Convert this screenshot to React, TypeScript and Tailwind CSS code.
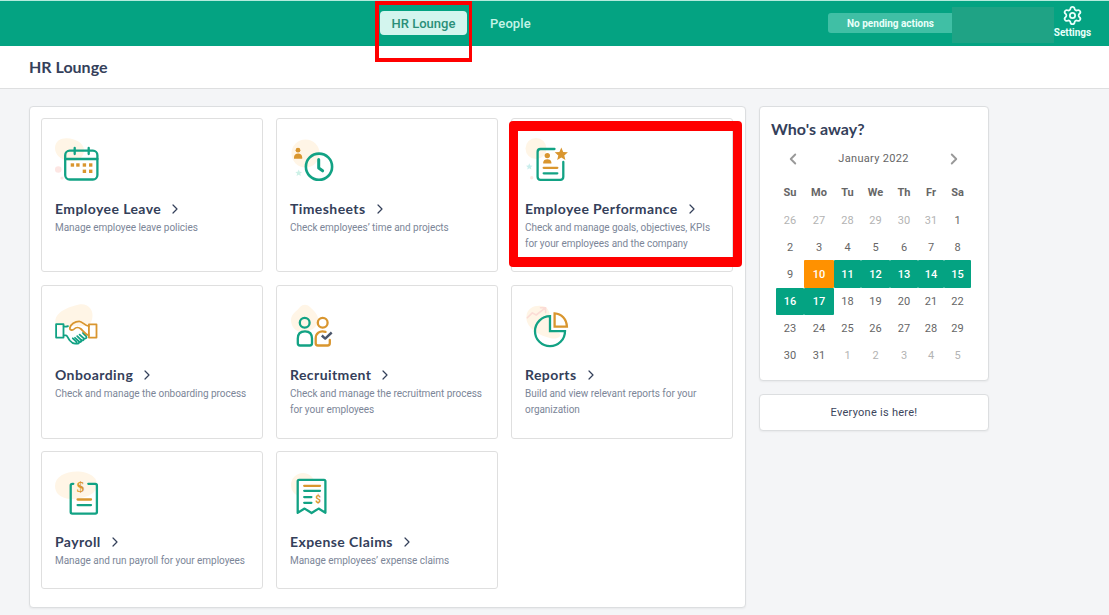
import React from 'react'
import { ChevronLeft, ChevronRight, Settings } from 'lucide-react'

const GREEN = '#12a284'
const ORANGE = '#d9962f'
const CREAM = '#fff5e6'

const STAR = 'M0 -6.8 L1.9 -2.4 L6.6 -2 L3 1.1 L4.1 5.8 L0 3.3 L-4.1 5.8 L-3 1.1 L-6.6 -2 L-1.9 -2.4 Z'

function Icon({ children }: { children: React.ReactNode }) {
  return (
    <svg
      width="48"
      height="48"
      viewBox="0 0 48 48"
      fill="none"
      stroke={GREEN}
      strokeWidth="2.3"
      strokeLinecap="round"
      strokeLinejoin="round"
      className="overflow-visible"
    >
      {children}
    </svg>
  )
}

function LeaveIcon() {
  return (
    <Icon>
      <path d="M0 12 C0 5 6 2 12 2.3 C20 2.6 29 7 29 14 C29 22 22 26 14 25 C6 24 0 19 0 12Z" fill={CREAM} stroke="none" />
      <circle cx="3.3" cy="33.5" r="3.3" fill="#fde6e3" stroke="none" />
      <circle cx="7" cy="42" r="1.6" fill="#fde6e3" stroke="none" />
      <rect x="10.2" y="14.7" width="32.2" height="28.8" rx="4.5" />
      <path d="M10.2 23 H42.4 M19.7 12 V18 M33.7 12 V18" />
      <g fill={ORANGE} stroke="none">
        <rect x="15.7" y="27.3" width="3.4" height="3.4" />
        <rect x="21.2" y="27.3" width="3.4" height="3.4" />
        <rect x="27.7" y="27.3" width="3.4" height="3.4" />
        <rect x="34" y="27.3" width="3.4" height="3.4" />
        <rect x="27.7" y="33.6" width="3.4" height="3.4" />
        <rect x="34" y="33.6" width="3.4" height="3.4" />
      </g>
    </Icon>
  )
}

function TimesheetIcon() {
  return (
    <Icon>
      <circle cx="15.5" cy="17.5" r="14" fill={CREAM} stroke="none" />
      <path d={STAR} transform="translate(8.7 37) scale(0.52)" fill="#cdf1e7" stroke="none" />
      <circle cx="8" cy="14.2" r="2.4" fill={ORANGE} stroke="none" />
      <path d="M4 22.8 V21.5 C4 19 5.8 17.6 8.1 17.6 C10.4 17.6 12.2 19 12.2 21.5 V22.8Z" fill={ORANGE} stroke="none" />
      <circle cx="29" cy="30.7" r="13.1" strokeWidth="2.6" />
      <path d="M28.7 23.5 V32 L32.6 34.8" strokeWidth="3" />
    </Icon>
  )
}

function PerformanceIcon() {
  return (
    <Icon>
      <circle cx="11" cy="12.5" r="10.5" fill={CREAM} stroke="none" />
      <path d={STAR} transform="translate(4.3 30.7) scale(0.5)" fill="#c9eeed" stroke="none" />
      <circle cx="6.7" cy="41.7" r="1.7" fill="#fde6e3" stroke="none" />
      <path d="M29.5 13 H15.5 Q12.6 13 12.6 16 V40.8 Q12.6 43.8 15.5 43.8 H35.3 Q38.3 43.8 38.3 40.8 V26" />
      <path d={STAR} transform="translate(36.3 18.3)" fill={ORANGE} stroke="none" />
      <circle cx="22.3" cy="19.6" r="2.7" fill={ORANGE} stroke="none" />
      <path d="M18.2 27.4 V26.6 C18.2 24.3 20 23.2 22.3 23.2 C24.6 23.2 26.4 24.3 26.4 26.6 V27.4Z" fill={ORANGE} stroke="none" />
      <path d="M18.7 31.8 H32.3" stroke={ORANGE} />
      <path d="M18.7 37.3 H32.3" />
    </Icon>
  )
}

function OnboardingIcon() {
  return (
    <Icon>
      <path d="M0.5 21 C-1 10 14 5 24 2.6 C33 1 38 8 37.5 14 C37 22 34 24 24 24 H6 C2 24 1 23 0.5 21Z" fill={CREAM} stroke="none" />
      <g strokeWidth="1.8">
        <rect x="1.1" y="22.2" width="7.4" height="13.4" />
        <path d="M8.7 24.2 C10.5 25 11.5 24.8 13 24.2" />
        <path d="M8.7 33.3 H11 C12.5 33.6 12.8 36 14.8 38.5 C16.5 40.5 18.5 42 20.7 41.6 C22 41.4 21.8 40 21 39.3 L17.8 36.3" />
        <path d="M20 35.8 L24 39.5 C25.5 40.8 27.4 39.2 26 37.8 L22.2 34.2" />
        <path d="M26 37.8 C27.8 39.2 29.8 37.6 28.5 36.2 L24.6 32.6 M28.5 36.2 C30.5 37.4 32.5 35.6 31 34 L28 31" />
        <path d="M21.5 41.4 C23 42.2 24.6 41 24.2 39.7" />
        <g stroke={ORANGE}>
          <rect x="33.9" y="22.4" width="7.6" height="13.2" />
          <path d="M33.8 24.2 C30 24 27.5 19.3 24.2 19.3 C20 19.3 15.5 22.3 14.8 26 C14.6 28.2 17.5 28.8 19.2 27 C21 25 24 25.2 26 27 C28 29 30.8 32.8 33.8 33.2" />
        </g>
      </g>
    </Icon>
  )
}

function RecruitmentIcon() {
  return (
    <Icon>
      <path d="M1 18 C1 12 7 9 10 5 C13 2 17 2 20 5 C24 9 29 13 28 19 C27 26 20 30 12 30 C5 30 1 24 1 18Z" fill={CREAM} stroke="none" />
      <circle cx="14.7" cy="20.7" r="4.9" />
      <path d="M7.8 41.3 V36.5 C7.8 31.7 10.5 29.3 15 29.3 C19.5 29.3 22 31.7 22 36.5 V41.3 Q22 43.5 19.8 43.5 H10 Q7.8 43.5 7.8 41.3Z" />
      <g stroke={ORANGE}>
        <circle cx="32.7" cy="20.7" r="4.9" />
        <path d="M35.5 29.8 C29.5 28 25.7 31.5 25.7 36.5 V41.3 Q25.7 43.5 27.9 43.5 H37.6 Q39.8 43.5 39.8 41.3 V38" />
      </g>
      <path d="M31.8 33.5 L35.2 36.6 L41.7 30.5" stroke="#4b566b" strokeWidth="2.4" strokeLinecap="butt" />
    </Icon>
  )
}

function ReportsIcon() {
  return (
    <Icon>
      <path d="M1.5 14 C2 6 10 3 17 4 C24 5 25 11 25 17 V29 L34 31 C38 34 32 38 25 36 C12 33 0 24 1.5 14Z" fill={CREAM} stroke="none" />
      <path d="M2.3 15.8 L7.3 10.9 L11.2 13 L20.4 5.8 M15.5 5.8 H20.6 V10.6" stroke="#fbdcd6" strokeWidth="1.6" />
      <path d="M25 14.2 A15 15 0 1 0 40 29.2 H25Z" strokeLinejoin="miter" />
      <path d="M29.6 11.4 C36.5 11.8 41.5 17 41.9 24.6 H29.6Z" stroke={ORANGE} strokeLinejoin="miter" />
    </Icon>
  )
}

function PayrollIcon() {
  return (
    <Icon>
      <path d="M0 17 C0 8 10 2.6 22 2.6 C33 2.6 43 8 42 17 C41 26 28 30 15 30 C5 29 0 24 0 17Z" fill={CREAM} stroke="none" />
      <path d="M18.3 14.8 H17.3 Q15.7 14.8 15.7 16.4 V43 Q15.7 44.6 17.3 44.6 H40.3 Q41.9 44.6 41.9 43 V16.4 Q41.9 14.8 40.3 14.8 H33.3" />
      <text x="25.4" y="23" textAnchor="middle" fontSize="15" fontWeight="700" fontFamily="Liberation Serif, serif" fill={ORANGE} stroke="none">$</text>
      <path d="M22.6 30.5 H36" stroke={ORANGE} />
      <path d="M22.6 36.1 H36" />
    </Icon>
  )
}

function ExpenseIcon() {
  return (
    <Icon>
      <circle cx="13" cy="16" r="12" fill={CREAM} stroke="none" />
      <path d="M7.7 43.8 V12.3 Q7.7 10.9 9.1 10.9 H34 Q35.4 10.9 35.4 12.3 V43.8 L28.6 39.6 L21.6 44 L14.6 39.6Z" fill="#fff" />
      <path d="M14.2 16.8 H30" stroke={ORANGE} />
      <path d="M14.2 21.8 H30 M14.2 28.1 H21.4 M14.2 33.8 H21.4" />
      <text x="28.2" y="33.5" textAnchor="middle" fontSize="10" fontWeight="700" fontFamily="Roboto, sans-serif" fill={ORANGE} stroke="none">$</text>
    </Icon>
  )
}

const modules = [
  { title: 'Employee Leave', text: 'Manage employee leave policies', icon: LeaveIcon },
  { title: 'Timesheets', text: 'Check employees’ time and projects', icon: TimesheetIcon },
  {
    title: 'Employee Performance',
    text: 'Check and manage goals, objectives, KPIs for your employees and the company',
    icon: PerformanceIcon,
    marked: true,
  },
  { title: 'Onboarding', text: 'Check and manage the onboarding process', icon: OnboardingIcon },
  { title: 'Recruitment', text: 'Check and manage the recruitment process for your employees', icon: RecruitmentIcon },
  { title: 'Reports', text: 'Build and view relevant reports for your organization', icon: ReportsIcon },
  { title: 'Payroll', text: 'Manage and run payroll for your employees', icon: PayrollIcon },
  { title: 'Expense Claims', text: 'Manage employees’ expense claims', icon: ExpenseIcon },
]

const weekdays = ['Su', 'Mo', 'Tu', 'We', 'Th', 'Fr', 'Sa']

// January 2022 starts on a Saturday, so the grid opens with six December days
const days = Array.from({ length: 42 }, (_, i) => {
  const n = i - 5
  if (n < 1) return { label: n + 31, outside: true, n }
  if (n > 31) return { label: n - 31, outside: true, n }
  return { label: n, outside: false, n }
})

function dayClass(day: { outside: boolean; n: number }) {
  if (day.n === 10) return '-mt-px h-[28px] pt-0.5 bg-[#ff9100] text-white font-medium rounded-[1px]'
  if (day.n > 10 && day.n < 16) return '-mt-px h-[28px] pt-0.5 bg-[#04a382] text-white font-medium rounded-[1px]'
  if (day.n === 16 || day.n === 17) return 'h-[27px] pt-px bg-[#04a382] text-white font-medium rounded-[1px]'
  return day.outside ? 'h-[27px] pt-px text-[#b3b3b3]' : 'h-[27px] pt-px text-[#666]'
}

function Header() {
  return (
    <header className="flex h-[46px] border-t border-[#b5ebdd] bg-[#04a382]">
      <nav className="flex flex-1 items-start pl-[380px] pt-2.5 text-[13px] font-medium">
        <div className="relative flex h-6 w-[87px] items-center justify-center rounded bg-[#d3f5ee] pt-0.5 text-[#2a8f78]">
          HR Lounge
          <div className="absolute -left-[5px] -top-[10px] h-[61px] w-[97px] border-4 border-r-3 border-[#ff0000]" />
        </div>
        <div className="ml-[23px] flex h-6 items-center pt-0.5 tracking-[0.1px] text-[#c4f3e7]">People</div>
      </nav>
      <div className="flex pr-[18px]">
        <div className="mt-3 flex h-5 w-[124px] items-center justify-center rounded-l-[3px] bg-[#40bfa5] pl-px text-[10px] font-bold text-[#eafffa]">
          No pending actions
        </div>
        <div className="mt-1.5 h-9 w-[102px] bg-[#1fa385]" />
        <button className="flex w-[37px] flex-col items-center pt-[4px] text-[10px] font-bold text-[#e9fffa]">
          <Settings size={21} strokeWidth={2} className="shrink-0" />
          <span className="leading-[14px]">Settings</span>
        </button>
      </div>
    </header>
  )
}

function Calendar() {
  return (
    <div className="h-[275px] rounded-[4px] border border-[#dcdee0] bg-white shadow-xs">
      <h2 className="pl-[11px] pt-3 font-[Lato] text-[16px] font-bold leading-[20px] tracking-[0.05px] text-[#34405a]">Who's away?</h2>
      <div className="mt-[10px] flex h-5 items-center justify-between pl-[24px] pr-[25px] text-[11px] text-[#666]">
        <ChevronLeft size={18} strokeWidth={2.5} className="-mt-px text-[#999]" />
        <span className="tracking-[0.3px]">January 2022</span>
        <ChevronRight size={18} strokeWidth={2.5} className="-mt-px text-[#999]" />
      </div>
      <div className="ml-4 mt-[10px] grid w-[195px] auto-rows-[27px] grid-cols-[28px_30px_27px_29px_28px_26px_27px] grid-rows-[28px] text-center text-[11px]">
        {weekdays.map((d) => (
          <div key={d} className="flex items-center justify-center font-bold text-[#666]">{d}</div>
        ))}
        {days.map((day) => (
          <div key={day.n} className={`flex items-center justify-center ${dayClass(day)}`}>{day.label}</div>
        ))}
      </div>
    </div>
  )
}

export default function App() {
  return (
    <div className="flex h-[615px] w-[1109px] flex-col overflow-hidden bg-[#f4f5f7] font-[Roboto,sans-serif]">
      <Header />
      <div className="flex h-[43px] items-center border-b border-[#dedfe0] bg-white pl-[29px]">
        <h1 className="font-[Lato] text-[16px] font-bold text-[#34405a]">HR Lounge</h1>
      </div>

      <main className="flex items-start gap-[13px] pl-[29px] pt-[17px]">
        <div className="grid h-[502px] w-[717px] grid-cols-[222.4px_222.4px_222.4px] grid-rows-[154px_154px_138px] gap-[12.6px] rounded-[4px] border border-[#dcdee0] bg-white p-[11px] shadow-xs">
          {modules.map(({ title, text, icon: ModuleIcon, marked }) => (
            <div key={title} className="relative rounded-[3px] border border-[#dfdfdf] px-[13px] pt-[16.8px]">
              <ModuleIcon />
              <div className="mt-4 flex items-center gap-[6px] text-[#34405a]">
                <h3 className="whitespace-nowrap font-[Lato] text-[14px] font-bold leading-[18px] tracking-[0.42px]">{title}</h3>
                <ChevronRight size={16} strokeWidth={1.8} />
              </div>
              <p className="mt-[2px] text-[10px] leading-4 tracking-[-0.04px] text-[#7c8698]">{text}</p>
              {marked && (
                <div className="absolute -left-[3px] top-[2px] h-[146px] w-[233px] rounded-[4px] border-x-9 border-y-10 border-[#ff0000]" />
              )}
            </div>
          ))}
        </div>

        <aside className="flex w-[230px] flex-col gap-[13px]">
          <Calendar />
          <div className="flex h-[37px] items-center justify-center rounded-[4px] border border-[#dcdee0] bg-white pt-px text-[11px] tracking-[0.27px] text-[#3c465c] shadow-xs">
            Everyone is here!
          </div>
        </aside>
      </main>
    </div>
  )
}
